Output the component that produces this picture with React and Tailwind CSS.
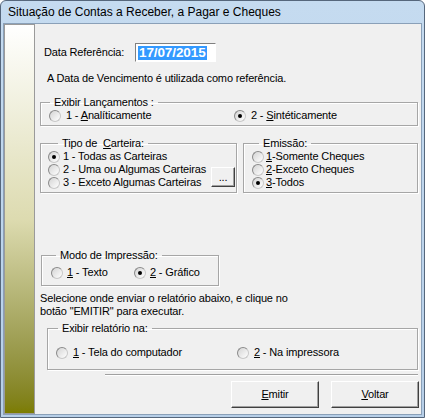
import React from 'react'

function Radio({ checked, children, className = '', gap = 'gap-[5px]' }) {
  return (
    <label className={`flex h-[13px] items-center whitespace-nowrap ${gap} ${className}`}>
      <span className="flex h-[12px] w-[12px] shrink-0 items-center justify-center rounded-full border border-t-[#8a8a8a] border-l-[#8a8a8a] border-r-[#c8c8c8] border-b-[#c8c8c8] bg-gradient-to-br from-[#d4d4d4] to-white">
        {checked && <span className="h-[4px] w-[4px] rounded-full bg-black" />}
      </span>
      <span>{children}</span>
    </label>
  )
}

function Group({ title, className = '', legend = 'ml-[8px]', children }) {
  return (
    <fieldset className={`border border-[#a6a6a6] shadow-[inset_1px_1px_0_#fff,1px_1px_0_#fff] ${className}`}>
      <legend className={`px-[4px] leading-[13px] whitespace-pre ${legend}`}>{title}</legend>
      {children}
    </fieldset>
  )
}

function Button({ children }) {
  return (
    <button className="h-[27px] w-[88px] border border-t-white border-l-white border-r-[#404040] border-b-[#404040] bg-[#f0f0f0] shadow-[inset_-1px_-1px_0_#a0a0a0]">
      {children}
    </button>
  )
}

export default function App() {
  return (
    <div className="h-[418px] w-[425px] overflow-hidden bg-white text-[11px] leading-[13px] tracking-[-0.15px] text-black" style={{ fontFamily: '"Liberation Sans", Arial, sans-serif' }}>
      <div className="flex h-full flex-col rounded-t-[6px] border border-[#56677c] bg-gradient-to-b from-[#c5dbf0] to-[#b7cfe8] px-[2px] pb-[2px]">
        {/* title bar */}
        <div className="flex h-[22px] items-center pl-[5px] text-[12px] tracking-normal text-black">
          Situação de Contas a Receber, a Pagar e Cheques
        </div>
        <div className="flex flex-1 border border-[#8aa0b8] bg-[#f0f0f0]">
          {/* side strip */}
          <div className="w-[31px] border border-[#9a9a9a] bg-gradient-to-b from-white via-[#dddbb0] to-[#7c7c00]" />
          <div className="flex flex-1 flex-col">
            <div className="mt-[19px] ml-[9px] flex h-[19px] items-center">
              <span className="w-[91px]">Data Referência:</span>
              <div className="flex h-[19px] w-[81px] items-center border border-t-[#808080] border-l-[#808080] border-r-white border-b-white bg-white pl-[2px]">
                <span className="bg-[#3399ff] px-[1px] text-[13.5px] leading-[14px] font-bold tracking-[-0.1px] text-white">17/07/2015</span>
              </div>
            </div>
            <div className="mt-[10px] ml-[12px]">A Data de Vencimento é utilizada como referência.</div>

            <Group title="Exibir Lançamentos :" legend="ml-[9px]" className="mt-[11px] ml-[5px] mr-[3px] pb-[3px]">
              <div className="flex pl-[8px]">
                <Radio className="w-[185px]">1 - <u>A</u>nalíticamente</Radio>
                <Radio checked>2 - <u>S</u>intéticamente</Radio>
              </div>
            </Group>

            <div className="mt-[11px] ml-[5px] mr-[3px] flex gap-[6px]">
              <Group title={<>Tipo de  <u>C</u>arteira:</>} legend="ml-[17px]" className="w-[197px] pb-[3px]">
                <div className="flex items-end justify-between pl-[7px] pr-[1px]">
                  <div className="flex flex-col">
                    <Radio checked gap="gap-[3px]">1 - Todas as Carteiras</Radio>
                    <Radio gap="gap-[3px]">2 - Uma ou Algumas Carteiras</Radio>
                    <Radio gap="gap-[3px]">3 - Exceto Algumas Carteiras</Radio>
                  </div>
                  <button className="mb-[2px] h-[20px] w-[24px] border border-t-white border-l-white border-r-[#404040] border-b-[#404040] leading-[10px] shadow-[inset_-1px_-1px_0_#a0a0a0]">...</button>
                </div>
              </Group>
              <Group title="Emissão:" legend="ml-[15px]" className="flex-1 pb-[3px]">
                <div className="flex flex-col pl-[8px]">
                  <Radio gap="gap-[2px]"><u>1</u>-Somente Cheques</Radio>
                  <Radio gap="gap-[2px]"><u>2</u>-Exceto Cheques</Radio>
                  <Radio checked gap="gap-[2px]"><u>3</u>-Todos</Radio>
                </div>
              </Group>
            </div>

            <Group title="Modo de Impressão:" legend="ml-[14px]" className="mt-[56px] ml-[6px] w-[178px] pb-[6px]">
              <div className="flex pl-[9px] pt-[4px]">
                <Radio className="w-[83px]" gap="gap-[4px]"><u>1</u> - Texto</Radio>
                <Radio checked gap="gap-[4px]"><u>2</u> - Gráfico</Radio>
              </div>
            </Group>

            <div className="mt-[6px] ml-[5px]">
              Selecione onde enviar o relatório abaixo, e clique no<br />
              botão "EMITIR" para executar.
            </div>

            <Group title="Exibir relatório na:" legend="ml-[10px]" className="mt-[4px] ml-[12px] mr-[3px] pb-[10px]">
              <div className="flex pl-[8px] pt-[11px]">
                <Radio className="w-[181px]"><u>1</u> - Tela do computador</Radio>
                <Radio><u>2</u> - Na impressora</Radio>
              </div>
            </Group>

            <div className="mt-[4px] ml-[70px] mr-[3px] h-[2px] border-t border-t-[#a0a0a0] border-b border-b-white" />

            <div className="mt-[5px] mr-[2px] flex justify-end gap-[12px]">
              <Button><u>E</u>mitir</Button>
              <Button><u>V</u>oltar</Button>
            </div>
          </div>
        </div>
      </div>
    </div>
  )
}
